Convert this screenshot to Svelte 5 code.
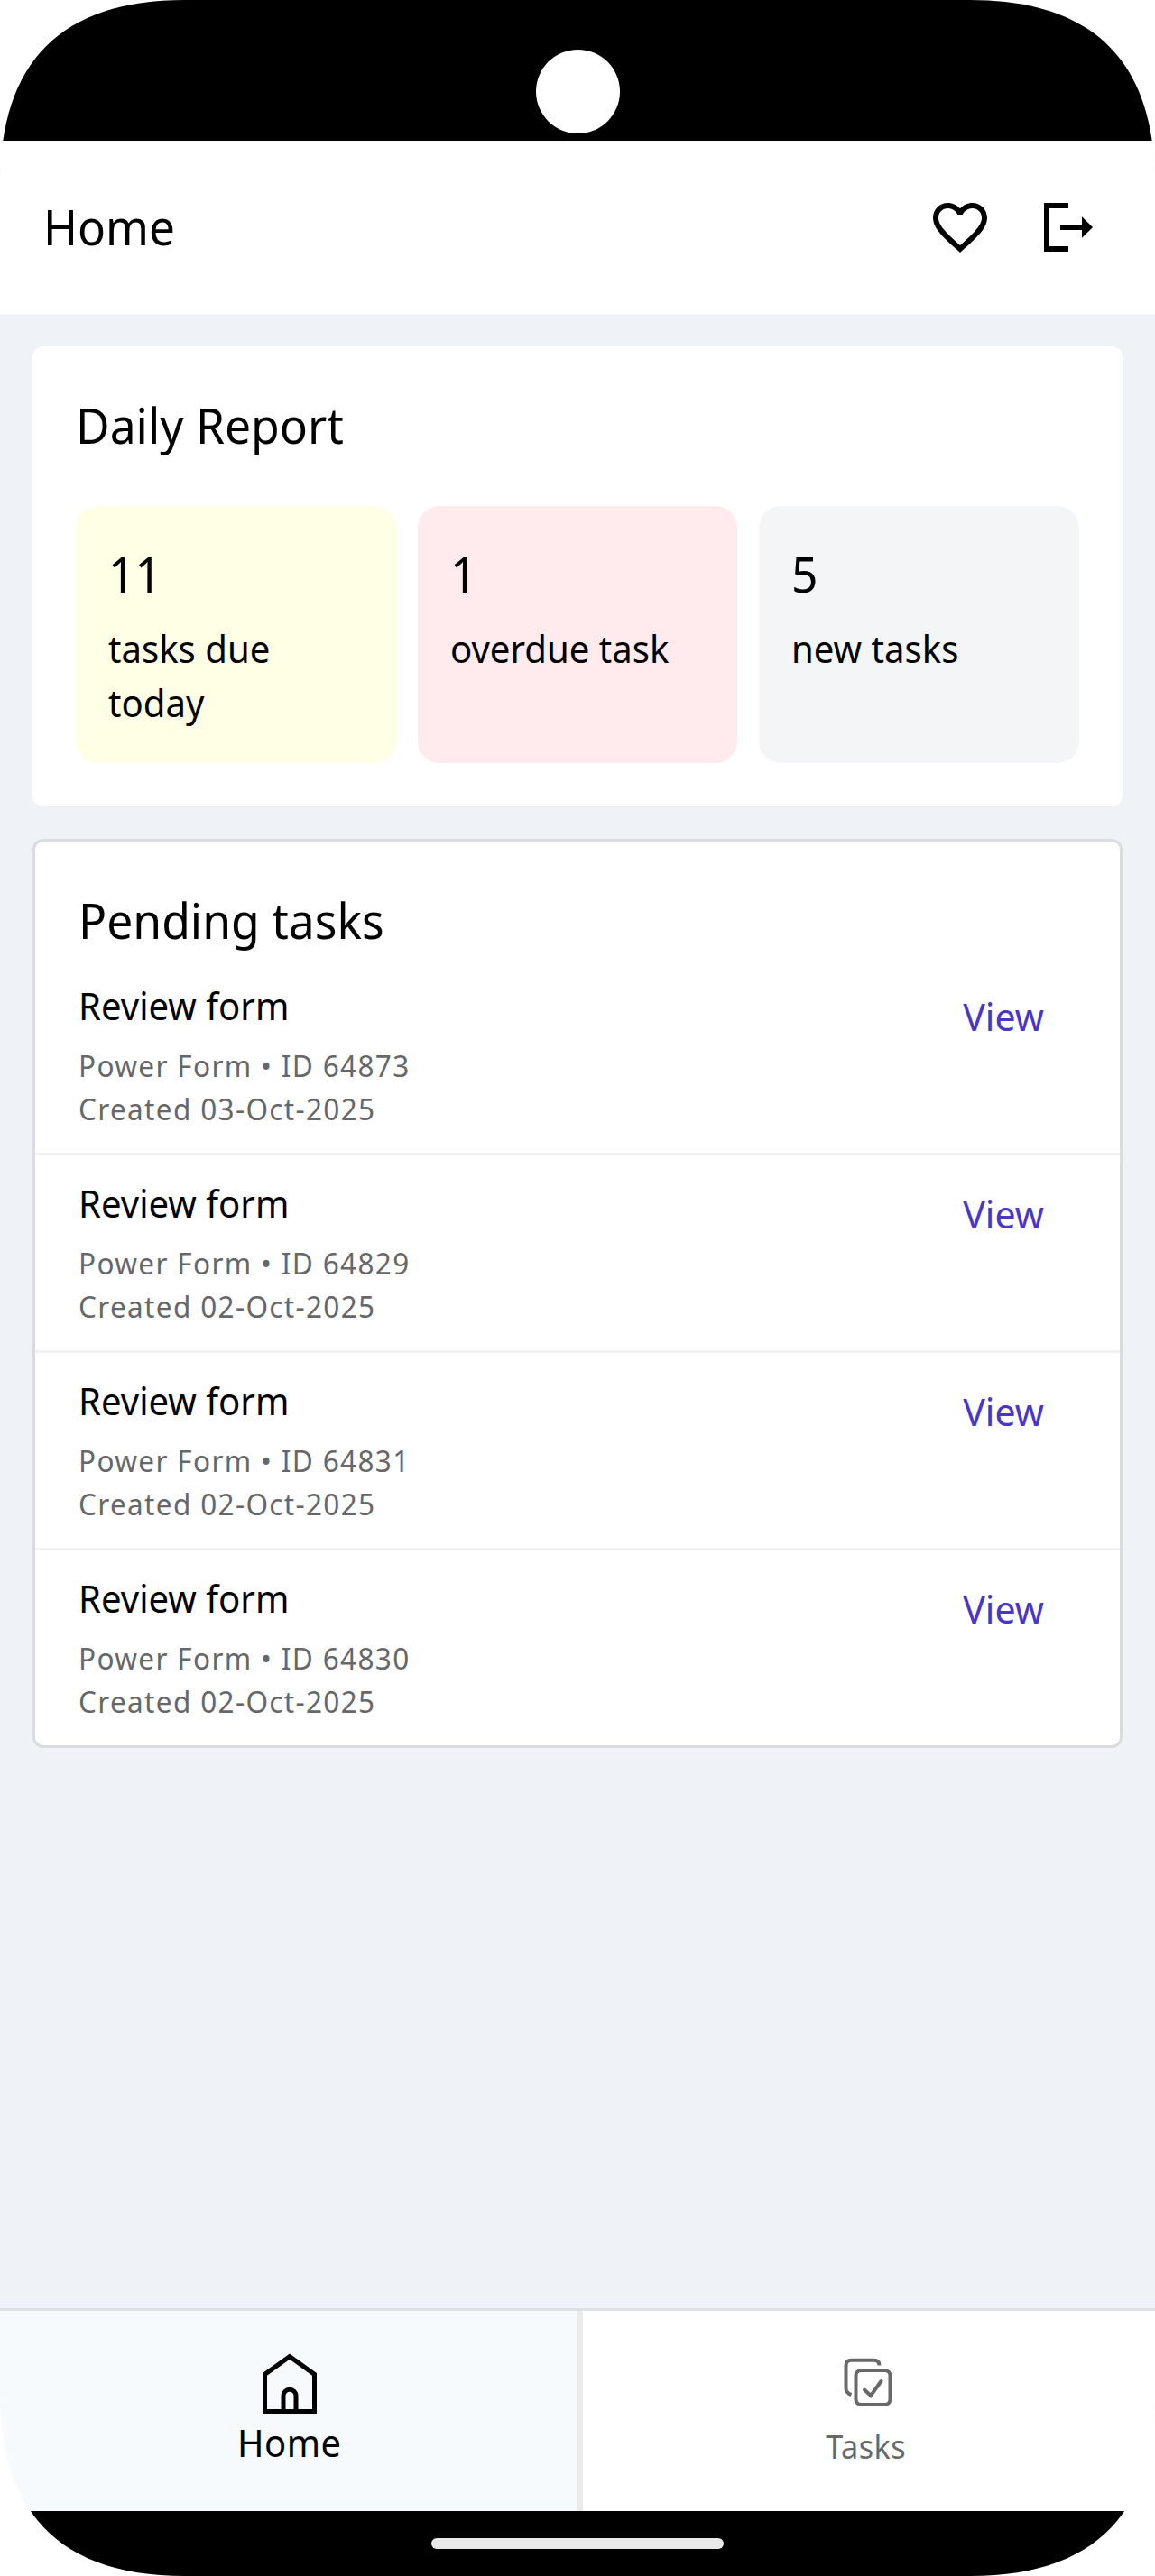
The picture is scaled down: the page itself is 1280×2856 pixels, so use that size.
<script lang="ts">
  const stats = [
    { count: 11, label: 'tasks due today', tone: 'due' },
    { count: 1, label: 'overdue task', tone: 'overdue' },
    { count: 5, label: 'new tasks', tone: 'fresh' }
  ];

  const tasks = [
    { id: 64873, title: 'Review form', source: 'Power Form', created: '03-Oct-2025' },
    { id: 64829, title: 'Review form', source: 'Power Form', created: '02-Oct-2025' },
    { id: 64831, title: 'Review form', source: 'Power Form', created: '02-Oct-2025' },
    { id: 64830, title: 'Review form', source: 'Power Form', created: '02-Oct-2025' }
  ];

  let activeTab = 'home';
</script>

<div class="screen">
  <div class="status-bar">
    <div class="camera"></div>
  </div>

  <header class="app-bar">
    <h1>Home</h1>
    <div class="actions">
      <button class="icon-btn" aria-label="Favourites">
        <svg width="72" height="72" viewBox="0 0 24 24">
          <path class="solid" d="M16.5 3c-1.74 0-3.41.81-4.5 2.09C10.91 3.81 9.24 3 7.5 3 4.42 3 2 5.42 2 8.5c0 3.78 3.4 6.86 8.55 11.54L12 21.35l1.45-1.32C18.6 15.36 22 12.28 22 8.5 22 5.42 19.58 3 16.5 3zm-4.4 15.55l-.1.1-.1-.1C7.14 14.24 4 11.39 4 8.5 4 6.5 5.5 5 7.5 5c1.54 0 3.04.99 3.57 2.36h1.87C13.46 5.99 14.96 5 16.5 5c2 0 3.5 1.5 3.5 3.5 0 2.89-3.14 5.74-7.9 10.05z" />
        </svg>
      </button>
      <button class="icon-btn" aria-label="Log out">
        <svg width="72" height="72" viewBox="0 0 72 72">
          <path d="M36 12 H12 V60 H36 M27 36 H52" />
          <path class="solid" d="M51 24.300 L63 36 L51 47.700 Z" />
        </svg>
      </button>
    </div>
  </header>

  <main>
    <section class="card report">
      <h2>Daily Report</h2>
      <div class="stats">
        {#each stats as stat}
          <div class="stat {stat.tone}">
            <span class="count">{stat.count}</span>
            <span class="label">{stat.label}</span>
          </div>
        {/each}
      </div>
    </section>

    <section class="card pending">
      <h2>Pending tasks</h2>
      <ul>
        {#each tasks as task}
          <li>
            <div class="info">
              <h3>{task.title}</h3>
              <p>{task.source} • ID {task.id}</p>
              <p>Created {task.created}</p>
            </div>
            <button class="view">View</button>
          </li>
        {/each}
      </ul>
    </section>
  </main>

  <nav>
    <button class="tab home" class:active={activeTab === 'home'} on:click={() => (activeTab = 'home')}>
      <svg width="72" height="72" viewBox="0 0 72 72">
        <path d="M8.500 27.400 L36 7.700 L63.500 27.400 V68.500 H8.500 Z M29 68.500 V51.200 a7 7 0 0 1 14 0 V68.500" />
      </svg>
      <span>Home</span>
    </button>
    <button class="tab tasks" class:active={activeTab === 'tasks'} on:click={() => (activeTab = 'tasks')}>
      <svg width="60" height="60" viewBox="0 0 60 60">
        <path d="M42.500 10.500 Q42.500 4.700 36.500 4.700 H11.500 Q5.500 4.700 5.500 10.700 V36 Q5.500 41 11.500 43" />
        <rect x="16.5" y="16" width="38" height="38" rx="6" />
        <path class="check" d="M26 37.500 L33 44 L44.500 28" />
      </svg>
      <span>Tasks</span>
    </button>
  </nav>

  <div class="gesture-bar">
    <div class="handle"></div>
  </div>
</div>

<style>
  :global(body) {
    background: #fff;
  }

  .screen {
    width: 1280px;
    height: 2856px;
    display: flex;
    flex-direction: column;
    overflow: hidden;
    /* smooth display corners, slightly squarer than a circle */
    clip-path: path('M0 205 C0 68 68 0 205 0 H1075 C1212 0 1280 68 1280 205 V2651 C1280 2788 1212 2856 1075 2856 H205 C68 2856 0 2788 0 2651 Z');
    background: #eff3f8;
    font-family: 'Noto Sans', sans-serif;
    color: #000;
  }

  h1, h2, h3, p, ul {
    margin: 0;
    padding: 0;
    font-weight: 400;
  }

  /* narrower letterforms than the default Noto width */
  h1, h2, h3, p, .count, .label {
    transform: scaleX(0.955);
    transform-origin: left;
  }

  button {
    padding: 0;
    border: none;
    background: none;
    font: inherit;
    color: inherit;
    cursor: pointer;
  }

  svg {
    display: block;
    fill: none;
    stroke: currentColor;
  }

  .status-bar {
    flex: none;
    height: 156px;
    box-sizing: border-box;
    padding-top: 55px;
    background: #000;
  }

  .camera {
    width: 93px;
    height: 93px;
    margin: 0 auto;
    border-radius: 50%;
    background: #fff;
  }

  .app-bar {
    flex: none;
    height: 192px;
    box-sizing: border-box;
    padding: 0 60px 0 48px;
    display: flex;
    align-items: center;
    justify-content: space-between;
    background: #fff;
  }

  h1, h2 {
    font-size: 54px;
    line-height: 72px;
  }

  h1 {
    margin-top: -2px;
    transform: scaleX(0.95);
  }

  .actions {
    display: flex;
    gap: 48px;
  }

  .icon-btn svg {
    stroke-width: 6;
  }

  .icon-btn .solid {
    fill: currentColor;
    stroke: none;
  }

  main {
    flex: 1;
    display: flex;
    flex-direction: column;
    gap: 36px;
    padding: 36px;
  }

  .card {
    box-sizing: border-box;
    border-radius: 12px;
    background: #fff;
  }

  .report {
    height: 510px;
    padding: 51px 48px 48px;
    display: flex;
    flex-direction: column;
    justify-content: space-between;
  }

  .stats {
    height: 285px;
    display: grid;
    grid-template-columns: repeat(3, 1fr);
    gap: 24px;
  }

  .stat {
    padding: 39px 36px 0;
    border-radius: 24px;
    display: flex;
    flex-direction: column;
  }

  .due {
    background: #ffffe6;
  }

  .overdue {
    background: #ffeaed;
  }

  .fresh {
    background: #f3f5f7;
  }

  .count {
    font-size: 54px;
    line-height: 72px;
    margin-bottom: 17px;
  }

  .label {
    font-size: 42px;
    line-height: 60px;
  }

  .pending {
    border: 3px solid #d9dde2;
    padding-top: 51px;
  }

  .pending h2 {
    margin: 0 48px 6px;
  }

  ul {
    list-style: none;
  }

  li {
    height: 219px;
    box-sizing: border-box;
    padding: 23px 84px 0 48px;
    display: flex;
    justify-content: space-between;
    align-items: flex-start;
    border-bottom: 3px solid #f1f2f4;
  }

  li:last-child {
    border-bottom: none;
    height: 216px;
  }

  h3 {
    font-size: 42px;
    line-height: 60px;
    margin-bottom: 13px;
  }

  p {
    font-size: 33px;
    line-height: 48px;
    letter-spacing: 1.4px;
    color: #65676b;
  }

  .view {
    margin-top: 12px;
    font-size: 42px;
    line-height: 60px;
    color: #4a35c9;
    transform: scaleX(0.975);
    transform-origin: right;
  }

  nav {
    flex: none;
    height: 225px;
    box-sizing: border-box;
    display: flex;
    border-top: 3px solid #dcdfe5;
    background: #fff;
  }

  .tab {
    flex: 1;
    box-sizing: border-box;
    display: flex;
    flex-direction: column;
    align-items: center;
    font-size: 36px;
    line-height: 48px;
    letter-spacing: 0.5px;
    color: #696969;
  }

  .tab span {
    transform: scaleX(0.95);
  }

  .home {
    flex: 0 0 646px;
    gap: 1px;
    padding: 43px 0 0 2px;
    border-right: 6px solid #ebebeb;
  }

  .tasks {
    gap: 17px;
    padding: 50px 3px 0 0;
  }

  .tasks span {
    margin-right: 3px;
  }

  .tab svg {
    stroke-width: 4;
  }

  .tab .check {
    stroke-linecap: round;
  }

  .tab.active {
    background: #f7fafd;
    font-size: 42px;
    line-height: 60px;
    color: #000;
  }

  .tab.active svg {
    stroke-width: 5;
  }

  .gesture-bar {
    flex: none;
    height: 72px;
    box-sizing: border-box;
    padding-top: 30px;
    background: #000;
  }

  .handle {
    width: 324px;
    height: 12px;
    margin: 0 auto;
    border-radius: 6px;
    background: #e9e9e9;
  }
</style>
